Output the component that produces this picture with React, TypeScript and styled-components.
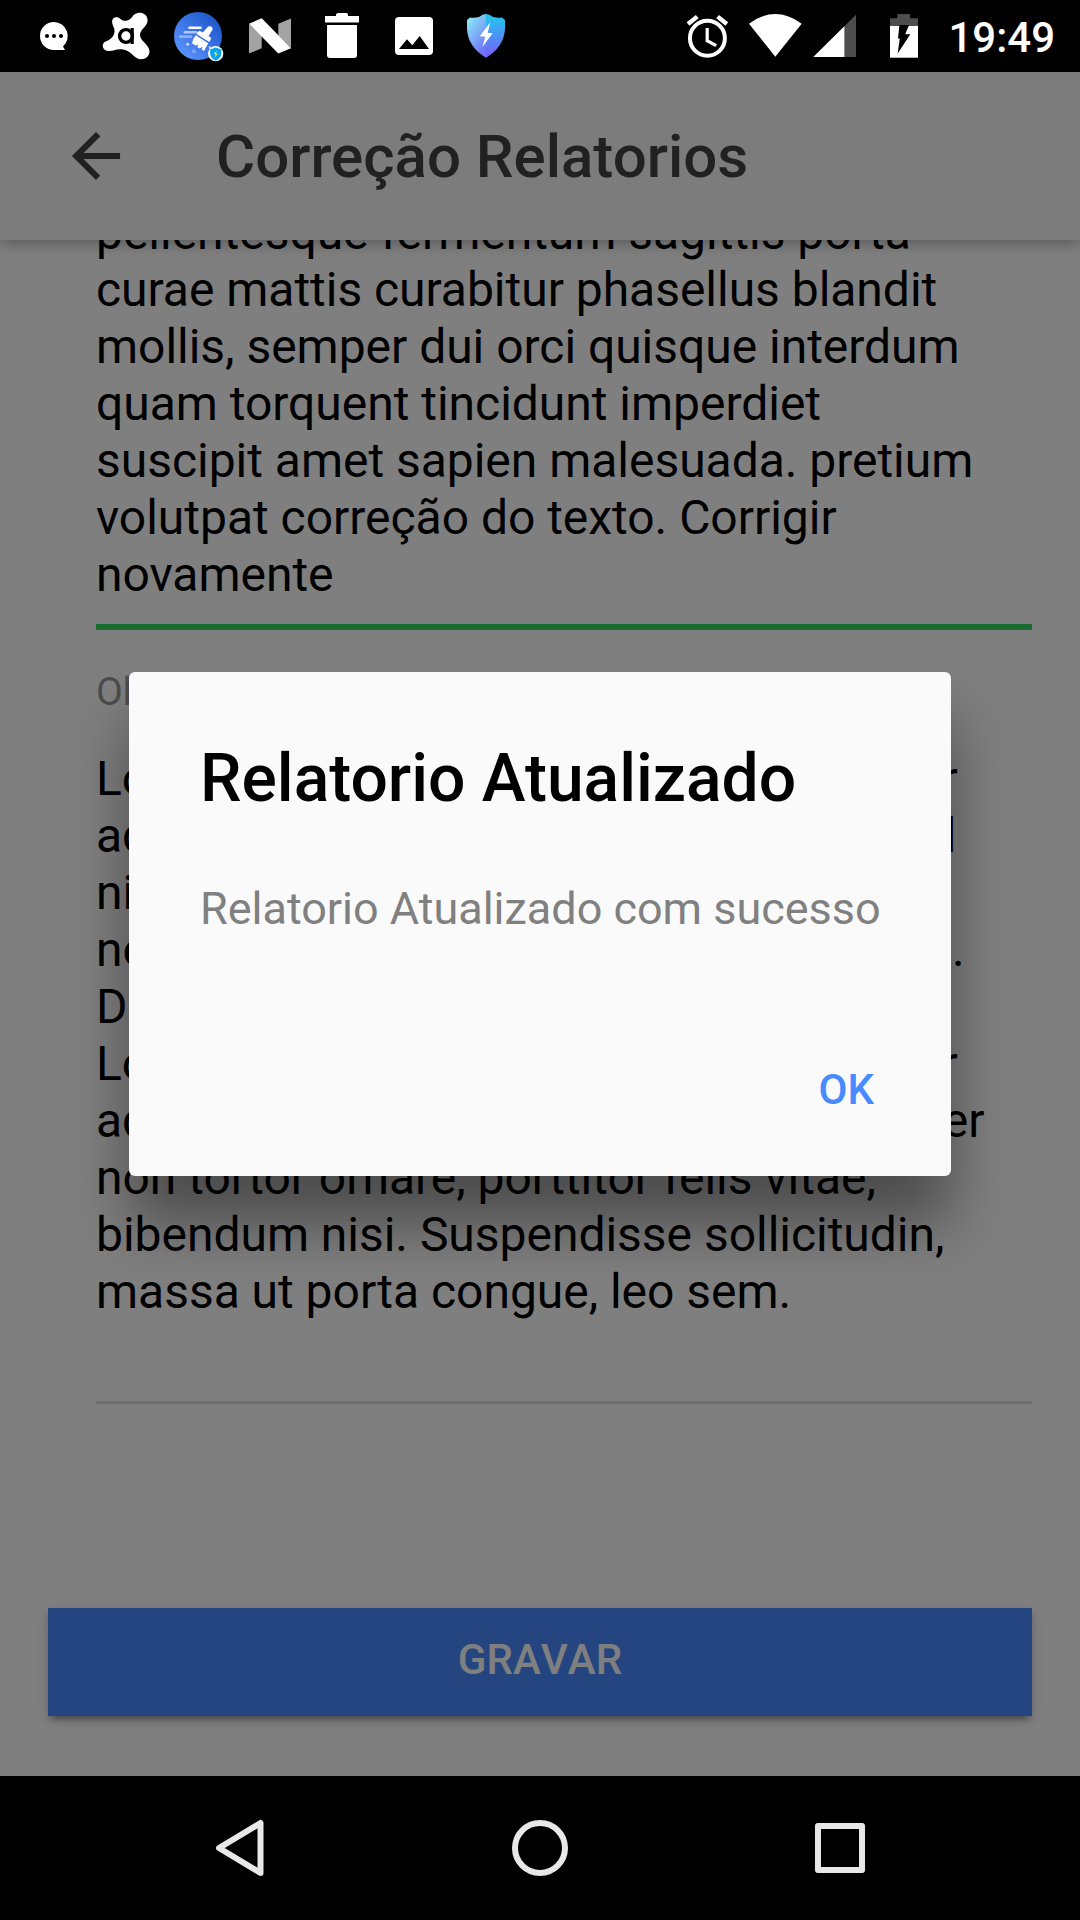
import React from "react";
import styled, { createGlobalStyle } from "styled-components";

const GlobalStyle = createGlobalStyle`
  * { box-sizing: border-box; }
  body { margin: 0; background: #000; }
`;

const Screen = styled.div`
  display: flex;
  flex-direction: column;
  width: 1080px;
  height: 1920px;
  overflow: hidden;
  background: #000;
  font-family: Roboto, "Liberation Sans", sans-serif;
`;

const StatusBar = styled.header`
  display: flex;
  justify-content: space-between;
  height: 72px;
  padding: 0 25px 0 18px;
`;

const StatusGroup = styled.div`
  display: flex;
  align-items: center;
`;

const Glyph = styled.svg<{ $width?: number }>`
  display: block;
  flex: none;
  width: ${(p) => p.$width ?? 72}px;
  height: 72px;
`;

const Clock = styled.time`
  margin-left: 20px;
  font-size: 42px;
  font-weight: 500;
  line-height: 76px;
  height: 72px;
  color: #fff;
`;

const AppView = styled.main`
  position: relative;
  display: flex;
  flex-direction: column;
  flex: 1;
  overflow: hidden;
  background: #fff;
`;

const Toolbar = styled.div`
  display: flex;
  align-items: center;
  flex: none;
  gap: 84px;
  height: 168px;
  padding: 0 60px;
  background: #f8f8f8;
  box-shadow: 0 3px 15px rgba(0, 0, 0, 0.32);
  z-index: 1;
`;

const BackIcon = styled.svg`
  width: 72px;
  height: 72px;
  fill: #424242;
`;

const Title = styled.h1`
  margin: 2px 0 0;
  font-size: 60px;
  font-weight: 500;
  line-height: 72px;
  color: #424242;
  white-space: nowrap;
`;

const Form = styled.form`
  display: flex;
  flex-direction: column;
  flex: 1;
  min-height: 0;
  padding: 0 48px;
`;

const Field = styled.div<{ $active?: boolean }>`
  display: flex;
  flex-direction: column;
  margin-left: 48px;
  padding-bottom: ${(p) => (p.$active ? 21 : 81)}px;
  border-bottom: ${(p) => (p.$active ? "6px solid #32db64" : "3px solid #dedede")};
`;

const ScrolledText = styled.div`
  margin-top: -36px;
`;

const Label = styled.label`
  margin: 40px 0 35px;
  font-size: 39px;
  line-height: 45px;
  color: #999;
`;

const Line = styled.div`
  font-size: 48px;
  line-height: 57px;
  letter-spacing: -0.025px;
  color: #000;
  white-space: nowrap;
`;

const SaveButton = styled.button`
  margin-top: 204px;
  height: 108px;
  border: 0;
  background: #488aff;
  color: #fff;
  font: 500 42px/104px Roboto, "Liberation Sans", sans-serif;
  font-kerning: none;
  padding: 0 0 4px;
  flex: none;
  box-shadow: 0 6px 6px rgba(0, 0, 0, 0.14), 0 9px 3px -6px rgba(0, 0, 0, 0.2),
    0 3px 15px rgba(0, 0, 0, 0.12);
`;

const Backdrop = styled.div`
  position: absolute;
  inset: 0;
  z-index: 2;
  display: flex;
  align-items: flex-start;
  justify-content: center;
  padding-top: 600px;
  background: rgba(0, 0, 0, 0.5);
`;

const Dialog = styled.section`
  display: flex;
  flex-direction: column;
  width: 822px;
  height: 504px;
  padding: 0 71px;
  border-radius: 6px;
  background: #fafafa;
  box-shadow: 0 48px 60px rgba(0, 0, 0, 0.4);
`;

const DialogTitle = styled.h2`
  margin: 68px 0 0;
  font-size: 66px;
  font-weight: 500;
  line-height: 78px;
  letter-spacing: -0.02px;
  color: #000;
  white-space: nowrap;
`;

const Message = styled.p`
  margin: 64px 0 0;
  font-size: 45px;
  line-height: 53px;
  letter-spacing: -0.02px;
  color: #808080;
  white-space: nowrap;
`;

const OkButton = styled.button`
  align-self: flex-end;
  margin: 130px 6px 0 0;
  padding: 0;
  border: 0;
  background: none;
  color: #488aff;
  font: 500 42px/50px Roboto, "Liberation Sans", sans-serif;
`;

const NavBar = styled.nav`
  display: flex;
  justify-content: space-between;
  align-items: center;
  height: 144px;
  padding: 0 204px;
`;

const NavIcon = styled.svg`
  width: 72px;
  height: 72px;
  fill: none;
  stroke: #e8e8e8;
  stroke-width: 6px;
  stroke-linejoin: round;
`;

const report = [
  "pellentesque fermentum sagittis porta",
  "curae mattis curabitur phasellus blandit",
  "mollis, semper dui orci quisque interdum",
  "quam torquent tincidunt imperdiet",
  "suscipit amet sapien malesuada. pretium",
  "volutpat correção do texto. Corrigir",
  "novamente",
];

const notes = [
  "Lorem ipsum dolor sit amet, consectetur",
  "adipiscing elit. Morbi cursus nibh vel nisl",
  "nisi, vitae mattis mauris semper",
  "nec. Integer amet lectus non elit lobortis.",
  "Donec vitae.",
  "Lorem ipsum dolor sit amet, consectetur",
  "adipiscing elit. Proin augue lectus. Integer",
  "non tortor ornare, porttitor felis vitae,",
  "bibendum nisi. Suspendisse sollicitudin,",
  "massa ut porta congue, leo sem.",
];

function NotificationIcons() {
  return (
    <StatusGroup>
      <Glyph viewBox="18 0 72 72">
        <path d="M54 22a14 14 0 1 0 0 28h11l-2-3.5A14 14 0 0 0 54 22z" fill="#fff" />
        <circle cx="47" cy="36" r="2" />
        <circle cx="54" cy="36" r="2" />
        <circle cx="61" cy="36" r="2" />
      </Glyph>
      <Glyph viewBox="90 0 72 72">
        <path
          d="M112.500 24C110.500 17 117 15.500 120.500 19C124 22 129 21.500 132.500 16.500C136.500 10.500 147 12 147.600 20C148 26 140.500 29 140 34.500C139.500 41 149 44 149.500 51C150 57 143 61 137.500 58.500C132 55.500 130 50.500 123 49.500C116 48.500 113 51.500 108 51C102 50.500 101 43.500 105.500 41.500C111 39.500 114.500 36 114.500 31C114.500 27.500 113 26.500 112.500 24z"
          fill="#fff"
        />
        <circle cx="126" cy="36" r="6.4" fill="none" stroke="#000" strokeWidth="3.4" />
        <path d="M132.2 28v16" stroke="#000" strokeWidth="3.2" />
      </Glyph>
      <Glyph viewBox="162 0 72 72">
        <defs>
          <linearGradient id="cleaner" x1="0" y1="1" x2="1" y2="0">
            <stop offset="0.1" stopColor="#5c94ff" />
            <stop offset="0.9" stopColor="#1b55c9" />
          </linearGradient>
        </defs>
        <circle cx="198" cy="36" r="24" fill="url(#cleaner)" />
        <g strokeLinecap="round" strokeWidth="2.6" stroke="#fff">
          <path d="M189.500 27.700H200.500" opacity="0.95" />
          <path d="M185 32.300H196" opacity="0.6" />
          <path d="M180.300 36.600H191" opacity="0.4" />
        </g>
        <path
          d="M210 26.300a2.700 2.700 0 0 1 2.500 3.400L208.500 36l2 1.300q1 1.200 0 2.700l-1.300 2L196.500 34l1.300-2q1.200-1.500 2.800-.7l2.200 1.200 4.700-5.200a3 3 0 0 1 2.500-1z"
          fill="#fff"
        />
        <path
          d="M195.700 35.200L208.300 43.200L204 51L201.700 49.600L202.600 46.700L199.500 48.400L197.300 47L198.300 44.600L195.300 45.500L192 43.300Q192.500 39 195.700 35.200z"
          fill="#fff"
        />
        <circle cx="187.700" cy="44.300" r="1.400" fill="#dce7ff" />
        <circle cx="194" cy="51.300" r="2" fill="#7da5f5" />
        <circle cx="210" cy="47.500" r="1.400" fill="#a9c5ff" />
        <circle cx="215.700" cy="53.700" r="7.600" fill="#fff" />
        <path
          d="M215.700 47.600l5.600 1.800v4.500q-.5 4.400-5.600 6.700q-5.100-2.300-5.600-6.700v-4.500z"
          fill="#08a5ee"
        />
        <path d="M216.700 50.300l-3 4h2l-.8 3.400 3-4.200h-2z" fill="#ffe14a" />
      </Glyph>
      <Glyph viewBox="234 0 72 72">
        <path d="M249 23.700L261.700 36V48.300L249 53.500z" fill="#a3a3a3" />
        <path d="M278.300 23.700L291 18.500V48.300L278.300 35.700z" fill="#a3a3a3" />
        <path d="M249 23.700L261.700 18.300L291 48.300L278.300 53.500z" fill="#fff" />
      </Glyph>
      <Glyph viewBox="306 0 72 72">
        <path
          d="M325 16h11v-1.500q.4-1.500 2-1.500h8.500q1.500 0 1.500 1.500V16h11v6.600H325zM327 25h30v30q0 3-3 3h-24q-3 0-3-3z"
          fill="#fff"
        />
      </Glyph>
      <Glyph viewBox="378 0 72 72">
        <rect x="395" y="17" width="38" height="38" rx="4" fill="#fff" />
        <path d="M399 49l8-9.700 5.300 6 7.400-9.300L429 49z" fill="#000" />
      </Glyph>
      <Glyph viewBox="450 0 72 72">
        <defs>
          <linearGradient id="shieldLeft" x1="0" y1="0" x2="0.6" y2="1">
            <stop offset="0.1" stopColor="#8be9f4" />
            <stop offset="1" stopColor="#6f74fb" />
          </linearGradient>
          <linearGradient id="shieldRight" x1="0" y1="0" x2="0" y2="1">
            <stop offset="0.1" stopColor="#28bff0" />
            <stop offset="1" stopColor="#7a5cf8" />
          </linearGradient>
        </defs>
        <path
          d="M486 14Q482 14 480 16.500Q475 18.500 470 17.500L467 20V29Q468 47 486 57.700z"
          fill="url(#shieldLeft)"
        />
        <path
          d="M486 14Q490 14 492 16.500Q497 18.500 502 17.500L505 20V29Q504 47 486 57.700z"
          fill="url(#shieldRight)"
        />
        <path d="M490.300 22.300L479.700 36.300L485.300 36.800L482.300 47L492.700 33.300L487.700 32.700z" fill="#fff" />
      </Glyph>
    </StatusGroup>
  );
}

function SystemIcons() {
  return (
    <StatusGroup>
      <Glyph $width={56} viewBox="680 0 56 72">
        <g fill="none" stroke="#fff">
          <circle cx="707.400" cy="38.300" r="17.500" strokeWidth="4" />
          <path d="M707.200 28v12.700l9 5" strokeWidth="3.200" />
          <path d="M688 24L697.200 16.600M717.600 16.600L726.800 24" strokeWidth="4.400" />
        </g>
      </Glyph>
      <Glyph $width={72} viewBox="736 0 72 72">
        <path d="M749 23.700Q775.300 4.500 801.700 23.700L775.300 56.700z" fill="#fff" />
      </Glyph>
      <Glyph $width={60} viewBox="808 0 60 72">
        <path d="M856 14.700V57H813.300z" fill="#4d4d4d" />
        <path d="M844.400 26.200V57H813.300z" fill="#fff" />
      </Glyph>
      <Glyph $width={60} viewBox="868 0 60 72">
        <path d="M890 18.300h7.400V14H910v4.300h8V26h-28z" fill="#4d4d4d" />
        <path d="M890 26h28v31.700h-28z" fill="#fff" />
        <path d="M899.400 25H909L905.200 34.200H910.300L897.700 53.500L899.800 38.400H898z" fill="#000" />
      </Glyph>
      <Clock>19:49</Clock>
    </StatusGroup>
  );
}

export default function App() {
  return (
    <Screen>
      <GlobalStyle />
      <StatusBar>
        <NotificationIcons />
        <SystemIcons />
      </StatusBar>
      <AppView>
        <Toolbar>
          <BackIcon viewBox="0 0 512 512">
            <path d="M427 234.625H167.296l119.702-119.702L256 85 85 256l171 171 29.922-29.924-118.626-119.701H427v-42.750z" />
          </BackIcon>
          <Title>Correção Relatorios</Title>
        </Toolbar>
        <Form>
          <Field $active>
            <ScrolledText>
              {report.map((line, i) => (
                <Line key={i}>{line}</Line>
              ))}
            </ScrolledText>
          </Field>
          <Field>
            <Label>Observação</Label>
            {notes.map((line, i) => (
              <Line key={i}>{line}</Line>
            ))}
          </Field>
          <SaveButton type="button">GRAVAR</SaveButton>
        </Form>
        <Backdrop>
          <Dialog role="alertdialog">
            <DialogTitle>Relatorio Atualizado</DialogTitle>
            <Message>Relatorio Atualizado com sucesso</Message>
            <OkButton>OK</OkButton>
          </Dialog>
        </Backdrop>
      </AppView>
      <NavBar>
        <NavIcon viewBox="204 1812 72 72">
          <path d="M219 1848L260.500 1823V1873z" />
        </NavIcon>
        <NavIcon viewBox="504 1812 72 72">
          <circle cx="540" cy="1848" r="25" />
        </NavIcon>
        <NavIcon viewBox="804 1812 72 72">
          <rect x="818" y="1826" width="44" height="44" />
        </NavIcon>
      </NavBar>
    </Screen>
  );
}
